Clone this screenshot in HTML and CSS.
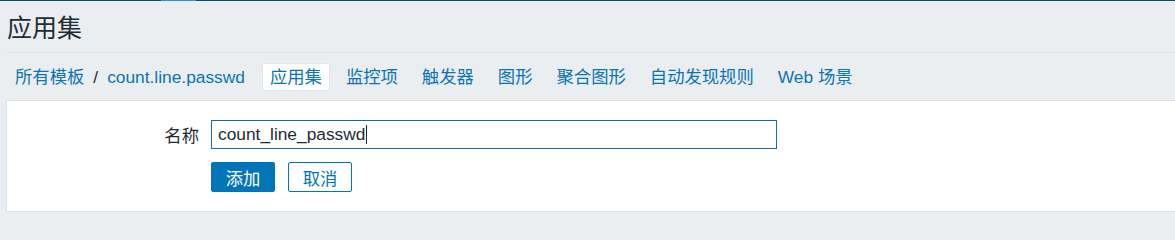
FILE: index.html
```html
<!DOCTYPE html>
<html lang="zh-CN">
<head>
<meta charset="utf-8">
<title>应用集</title>
<link rel="stylesheet" href="styles.css">
</head>
<body>
<div class="topline"><span class="topline-mark"></span></div>
<header class="page-header">
  <h1 class="page-title">应用集</h1>
</header>
<nav class="tabs">
  <ul class="tab-list">
    <li class="crumb"><a href="#">所有模板</a></li>
    <li class="crumb-sep">/</li>
    <li class="crumb"><a href="#">count.line.passwd</a></li>
    <li class="tab tab-active"><span>应用集</span></li>
    <li class="tab"><a href="#">监控项</a></li>
    <li class="tab"><a href="#">触发器</a></li>
    <li class="tab"><a href="#">图形</a></li>
    <li class="tab"><a href="#">聚合图形</a></li>
    <li class="tab"><a href="#">自动发现规则</a></li>
    <li class="tab"><a href="#">Web 场景</a></li>
  </ul>
</nav>
<main class="panel">
  <form class="form">
    <div class="form-row">
      <label class="form-label" for="name">名称</label>
      <div class="form-field"><div class="input"><span class="input-text">count_line_passwd</span><span class="caret"></span></div></div>
    </div>
    <div class="form-row form-actions">
      <div class="form-label"></div>
      <div class="form-field buttons">
        <button type="button" class="btn btn-primary">添加</button>
        <button type="button" class="btn btn-alt">取消</button>
      </div>
    </div>
  </form>
</main>
</body>
</html>
```

FILE: styles.css
```css
html, body {
  margin: 0;
  padding: 0;
}
body {
  background: #ebeef0;
  font-family: "Liberation Sans", "Noto Sans CJK SC", sans-serif;
  font-size: 17.33px;
  color: #1f2c33;
  width: 1175px;
  height: 229px;
  overflow: hidden;
}
.topline {
  height: 1px;
  background: #0d4a6b;
  display: flex;
}
.topline-mark {
  margin-left: 161px;
  width: 35px;
  height: 1px;
  background: #2b94d6;
}
.page-header {
  margin-left: 6px;
  height: 51px;
  border-bottom: 1px solid #dde3e7;
  display: flex;
  align-items: center;
}
.page-title {
  margin: 0 0 0 1px;
  font-size: 25px;
  font-weight: normal;
  line-height: 30px;
  color: #1f2c33;
  position: relative;
  top: 1px;
}
.tabs {
  margin-left: 7px;
  height: 47px;
  display: flex;
  align-items: center;
}
.tab-list {
  list-style: none;
  margin: 0;
  padding: 0;
  display: flex;
  align-items: center;
  gap: 8px;
}
.tab-list li {
  height: 28px;
  line-height: 28px;
  padding: 0 8px;
  box-sizing: border-box;
  white-space: nowrap;
}
.tab-list a {
  color: #0a74b6;
  text-decoration: none;
}
.crumb-sep {
  color: #1f2c33;
  padding: 0 !important;
  margin: 0 -7px;
}
.tab-active {
  margin-left: 1px;
  background: #ffffff;
  border: 1px solid #e3e7ea;
  border-radius: 2px;
  line-height: 26px !important;
  padding: 0 7px !important;
  color: #0a74b6;
}
.panel {
  margin-left: 6px;
  height: 110px;
  background: #ffffff;
  border: 1px solid #dde3e7;
  border-right: none;
}
.form {
  padding-top: 19px;
}
.form-row {
  display: flex;
  align-items: center;
}
.form-label {
  width: 204px;
  text-align: right;
  padding-right: 12px;
  box-sizing: border-box;
  color: #1f2c33;
  flex: none;
}
.input {
  width: 566px;
  height: 29px;
  box-sizing: border-box;
  border: 1px solid #1a6aa3;
  background: #fff;
  display: flex;
  align-items: center;
  padding-left: 6px;
  color: #1f2c33;
}
.caret {
  width: 1px;
  height: 19px;
  background: #1f2c33;
  margin-left: 1px;
}
.form-actions {
  margin-top: 13px;
}
.buttons {
  display: flex;
  gap: 13px;
}
.btn {
  width: 64px;
  height: 30px;
  border-radius: 2px;
  font-family: "Liberation Sans", "Noto Sans CJK SC", sans-serif;
  font-size: 17.33px;
  padding: 0;
  box-sizing: border-box;
  cursor: pointer;
}
.btn-primary {
  background: #0275b8;
  border: 1px solid #0275b8;
  color: #ffffff;
}
.btn-alt {
  background: #ffffff;
  border: 1px solid #0275b8;
  color: #0275b8;
}
```
